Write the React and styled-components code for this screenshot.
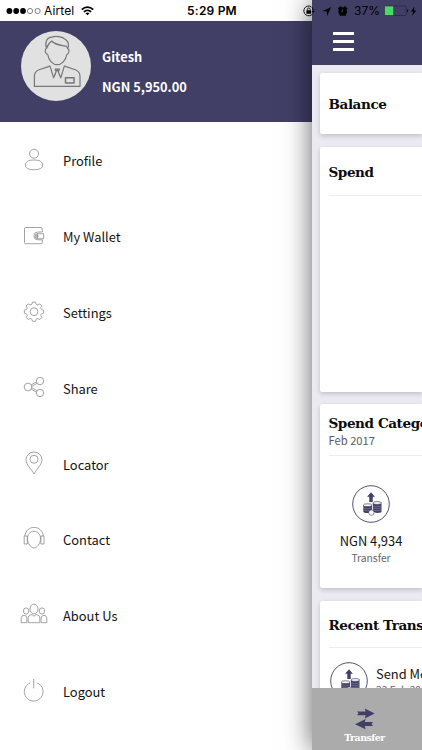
import styled, { createGlobalStyle } from "styled-components";

const NAVY = "#413f66";
const SANS = `"Noto Sans CJK SC", "Noto Sans", sans-serif`;
const SLAB = `"DejaVu Serif", serif`;

const menu = [
    { label: "Profile", Icon: ProfileIcon },
    { label: "My Wallet", Icon: WalletIcon },
    { label: "Settings", Icon: SettingsIcon },
    { label: "Share", Icon: ShareIcon },
    { label: "Locator", Icon: LocatorIcon },
    { label: "Contact", Icon: ContactIcon },
    { label: "About Us", Icon: AboutIcon },
    { label: "Logout", Icon: LogoutIcon },
];

export default function App() {
    return (
        <Screen>
            <GlobalStyle />
            <Drawer>
                <StatusSpace />
                <UserHeader>
                    <Avatar><PersonIcon /></Avatar>
                    <UserInfo>
                        <UserText>Gitesh</UserText>
                        <UserText>NGN 5,950.00</UserText>
                    </UserInfo>
                </UserHeader>
                <Menu>
                    {menu.map(({ label, Icon }) => (
                        <MenuItem key={label}>
                            <Icon />
                            <span>{label}</span>
                        </MenuItem>
                    ))}
                </Menu>
            </Drawer>
            <Home>
                <TopBar>
                    <Burger><i /><i /><i /></Burger>
                </TopBar>
                <Cards>
                    <Card $height={61}>
                        <CardHead $height={61}><CardTitle>Balance</CardTitle></CardHead>
                    </Card>
                    <Card $height={245}>
                        <CardHead $height={49} $line><CardTitle>Spend</CardTitle></CardHead>
                    </Card>
                    <Card $height={184}>
                        <CardHead $height={52} $line>
                            <CardTitle>Spend Categories</CardTitle>
                            <CardDate>Feb 2017</CardDate>
                        </CardHead>
                        <Category>
                            <CoinsIcon />
                            <Amount>NGN 4,934</Amount>
                            <Kind>Transfer</Kind>
                        </Category>
                    </Card>
                    <Card $height={184}>
                        <CardHead $height={47} $line><CardTitle>Recent Transactions</CardTitle></CardHead>
                        <Transaction>
                            <CoinsIcon />
                            <div>
                                <TransactionName>Send Money</TransactionName>
                                <TransactionDate>22 Feb 2017</TransactionDate>
                            </div>
                        </Transaction>
                    </Card>
                </Cards>
                <TabBar>
                    <Tab>
                        <TransferIcon />
                        <span>Transfer</span>
                    </Tab>
                </TabBar>
            </Home>
            <StatusBar>
                <StatusLeft>
                    <SignalIcon />
                    <span>Airtel</span>
                    <WifiIcon />
                </StatusLeft>
                <Clock>5:29 PM</Clock>
                <StatusRight>
                    <StatusIcons />
                    <span>37%</span>
                    <BatteryIcon />
                </StatusRight>
            </StatusBar>
        </Screen>
    );
}

/* ---------- status bar icons ---------- */

function SignalIcon() {
    return (
        <svg width="35" height="8" viewBox="0 0 35 8">
            {[3.4, 10.2, 17].map((x) => <circle key={x} cx={x} cy="4" r="2.9" />)}
            {[24, 31.6].map((x) => (
                <circle key={x} cx={x} cy="4" r="2.6" fill="none" stroke="#333" strokeWidth="0.6" />
            ))}
        </svg>
    );
}

function WifiIcon() {
    return (
        <svg width="13" height="10" viewBox="0 0 13 10" fill="none" stroke="#000" strokeWidth="1.7">
            <path d="M0.8 3.6C4 .3 9 .3 12.2 3.6M2.9 5.9c2-2 5.2-2 7.2 0" />
            <path d="M6.5 9.3L4.5 7.3c1.1-1 2.9-1 4 0z" fill="#000" stroke="none" />
        </svg>
    );
}

/* rotation lock, location arrow and alarm */
function StatusIcons() {
    return (
        <svg width="46" height="14" viewBox="0 0 46 14">
            <path d="M9.3 2.7A4.900 4.900 0 1 0 10.500 10M9.900 3.200a4.900 4.900 0 0 1 1.300 4.400" fill="none" stroke="#000" strokeWidth="0.9" />
            <path d="M9.5 7h3.4L11.2 9z" />
            <rect x="4.4" y="6.2" width="4.8" height="3.6" rx="0.4" />
            <path d="M5.4 6.4V5.3a1.4 1.4 0 0 1 2.8 0v1.1" fill="none" stroke="#000" strokeWidth="0.8" />
            <path d="M29.3 2.9L20.5 7.100l4.300.5.4 4.200z" />
            <circle cx="40.7" cy="7.5" r="4.3" />
            <path d="M36.4 5.2l2.7-2.6M45 5.200l-2.700-2.600M37.900 11.700l1-1M43.500 11.700l-1-1" stroke="#000" strokeWidth="1.6" />
            <path d="M40.7 5v2.8l-2-.9" fill="none" stroke={NAVY} strokeWidth="0.8" />
        </svg>
    );
}

function BatteryIcon() {
    return (
        <svg width="34" height="12" viewBox="0 0 34 12">
            <rect x="0.5" y="1" width="21.6" height="9.5" rx="1" fill="none" stroke="#25243b" strokeWidth="0.7" />
            <rect x="0.8" y="1.3" width="8.4" height="8.9" fill="#4cd964" />
            <path d="M23.2 4.3v3c1.4-.4 1.4-2.6 0-3z" />
            <path d="M30.6 1.4l-3.7 5h2.2l-.9 4.4 4.1-5.4h-2.4z" />
        </svg>
    );
}

/* ---------- drawer icons ---------- */

function PersonIcon() {
    return (
        <svg width="70" height="70" viewBox="0 0 70 70" fill="none" stroke="#777" strokeWidth="1.2" strokeLinejoin="round">
            <path d="M25.6 17.3C23.4 11 26 6.4 30.8 6.2c3-1.500 10.800-.9 13.500 2.100C47.800 11 48 14.500 46.800 17.600" />
            <path d="M25.6 17.3c1-3.500 1.700-5 5.200-7.300 3.500 4.200 9 4.300 14.600 5.200l1.400 2.400c1.900.7 1.500 5-1 5.900-.9 5.900-5.400 10.200-9.600 10.200s-8.600-4.300-9.500-10.200c-2.800-1-3.300-5.300-1.100-6.200z" />
            <path d="M29 34.8l-1.500.8-9.500 3.200c-3.200 1.200-4.600 3-4.600 6.700v9.800H59v-9.800c0-3.700-1.400-5.500-4.600-6.700l-9.500-3.200-1.500-.8" />
            <path d="M29 34.8l3.600 12 3.500-8.700 3.700 8.700 3.600-12M34 38h4.600l-1.200 2.600 1.200 4M34 38l1.100 2.600-1.300 4" />
            <rect x="44.5" y="46.7" width="8.5" height="5.3" strokeWidth="1.5" />
        </svg>
    );
}

function ProfileIcon() {
    return (
        <LineIcon>
            <circle cx="14" cy="7.7" r="4.5" />
            <path d="M14 14c5.6 0 8.6 1.7 8.6 5s-3 4.700-8.600 4.700S5.400 22.300 5.400 19s3-5 8.600-5z" />
        </LineIcon>
    );
}

function WalletIcon() {
    return (
        <LineIcon>
            <path d="M22.3 10V7q0-1.500-1.500-1.500H5.700q-1.200 0-1.200 1.200v13.800q0 1.200 1.200 1.200h15.100q1.500 0 1.500-1.500v-2.500" />
            <path d="M23.6 11.7v5h-6.200v-5zM22.300 10h-4.500a3.900 3.900 0 0 0 0 7.800h4.500M17.700 11.700a2.400 2.400 0 0 0 0 5" />
            <circle cx="17.2" cy="14.1" r="1" />
        </LineIcon>
    );
}

function SettingsIcon() {
    return (
        <LineIcon>
            <circle cx="14" cy="13.7" r="3.9" />
            {/* one tooth outline repeated around the hub */}
            {[0, 45, 90, 135, 180, 225, 270, 315].map((a) => (
                <path
                    key={a}
                    transform={`rotate(${a} 14 13.7)`}
                    d="M11.1 6.7Q12.2 6.3 12.2 5.1L12.5 4.1h3L15.8 5.1Q15.8 6.3 16.9 6.7"
                />
            ))}
        </LineIcon>
    );
}

function ShareIcon() {
    return (
        <LineIcon>
            <circle cx="8" cy="13" r="3.8" />
            <circle cx="20" cy="7" r="3.7" />
            <circle cx="20" cy="19" r="3.7" />
            <path d="M11.2 10.8l5.4-3M11.8 12.3l5.4-3M11.2 15.2l5.4 3M11.8 13.7l5.4 3" />
        </LineIcon>
    );
}

function LocatorIcon() {
    return (
        <LineIcon>
            <path d="M14 24C12 20 6 14.5 6 9.8a8 7.8 0 0 1 16 0C22 14.5 16 20 14 24z" />
            <circle cx="14" cy="9.3" r="4" />
        </LineIcon>
    );
}

function ContactIcon() {
    return (
        <LineIcon>
            <path d="M14 6.3c4 0 6.5 3 6.5 7.5 0 4.700-3.500 9.200-6.500 9.200s-6.500-4.500-6.500-9.200c0-4.500 2.500-7.500 6.500-7.500z" />
            <path d="M4.8 11C5.6 5.6 9.3 2.4 14 2.4s8.600 3.200 9.400 8.600" />
            <path d="M7.3 11H4.2v8h3.1zM20.9 11H24v8h-3.100z" />
        </LineIcon>
    );
}

function AboutIcon() {
    return (
        <LineIcon>
            <ellipse cx="14" cy="8" rx="4" ry="4.9" />
            <ellipse cx="6.1" cy="10" rx="2.7" ry="3.1" />
            <ellipse cx="21.9" cy="10" rx="2.7" ry="3.1" />
            <path d="M8.2 21.7v-5q0-2.200 2.300-2.700l1.500-.5 2 1.800 2-1.800 1.500.5q2.300.5 2.300 2.700v5z" />
            <path d="M6.9 21.7H1.2v-4.500c0-1.700 1.200-2.800 2.900-2.800q2.800 0 2.800 2.800zM21.100 21.700h5.700v-4.500c0-1.700-1.200-2.800-2.900-2.800q-2.800 0-2.800 2.800z" />
        </LineIcon>
    );
}

function LogoutIcon() {
    return (
        <LineIcon>
            <path d="M10.3 5.9a9.4 9.4 0 1 0 6.8 0M13.7 2v9.3" />
        </LineIcon>
    );
}

/* ---------- home icons ---------- */

function CoinsIcon() {
    return (
        <svg width="38" height="38" viewBox="0 0 38 38" fill={NAVY}>
            <circle cx="19" cy="19" r="18.3" fill="#fff" stroke={NAVY} strokeWidth="0.9" />
            <path d="M19 7.3l3.9 4.5h-2.2V17h-3.400v-5.200h-2.200z" />
            <path d="M11.3 20.2v6.6c0 1.6 8.700 1.600 8.700 0v-6.600zM20.800 18v8.800c0 1.600 8.700 1.600 8.700 0V18z" />
            <g fill="#fff" stroke={NAVY} strokeWidth="0.7">
                <ellipse cx="15.65" cy="20.2" rx="4.3" ry="1.4" />
                <ellipse cx="25.15" cy="18" rx="4.3" ry="1.4" />
            </g>
            <path d="M11.6 23q4 1.5 8 0M11.6 25q4 1.5 8 0M21 21q4 1.5 8.2 0M21 23q4 1.5 8.2 0M21 25q4 1.5 8.2 0" fill="none" stroke="#a9a8c0" strokeWidth="0.4" />
            <circle cx="19.4" cy="27.6" r="2.7" fill="#fff" stroke={NAVY} strokeWidth="0.6" />
        </svg>
    );
}

function TransferIcon() {
    return (
        <svg width="22" height="22" viewBox="0 0 22 22" fill={NAVY}>
            <path d="M3 3.4h8.6L10.8.4l9.9 5-9.900 5 .8-3.200H3l1.500-1.900z" />
            <path d="M19 14h-8.200l.8-2.900L1 16.200l10.600 5-.8-3.200H19L17.500 16z" />
        </svg>
    );
}

const GlobalStyle = createGlobalStyle`
    * {
        box-sizing: border-box;
    }
    body {
        margin: 0;
        font-family: ${SANS};
    }
`;

const Screen = styled.div`
    position: relative;
    display: flex;
    width: 422px;
    height: 750px;
    overflow: hidden;
    background: #fff;
`;

const Drawer = styled.aside`
    display: flex;
    flex-direction: column;
    width: 312px;
    flex-shrink: 0;
`;

const StatusSpace = styled.div`
    height: 20.5px;
`;

const UserHeader = styled.header`
    display: flex;
    gap: 11.5px;
    height: 101.5px;
    padding: 10.5px 0 0 20.5px;
    background: ${NAVY};
`;

const Avatar = styled.div`
    width: 70px;
    height: 70px;
    border-radius: 50%;
    background: #e1e1e1;
`;

const UserInfo = styled.div`
    display: flex;
    flex-direction: column;
    gap: 10px;
    padding-top: 16px;
`;

const UserText = styled.div`
    color: #fff;
    font-size: 12.8px;
    font-weight: 700;
    line-height: 20px;
`;

const Menu = styled.nav`
    display: flex;
    flex-direction: column;
`;

const MenuItem = styled.a`
    display: flex;
    align-items: center;
    gap: 15px;
    height: 75.9px;
    padding-left: 20px;
    color: #141414;
    font-size: 12.9px;
    line-height: 20px;

    span {
        padding-top: 2px;
    }
`;

const LineIcon = styled.svg.attrs({ viewBox: "0 0 28 28", width: 28, height: 28 })`
    fill: none;
    stroke: #8c8c8c;
    stroke-width: 0.8;
    overflow: visible;
`;

const Home = styled.main`
    position: relative;
    display: flex;
    flex-direction: column;
    width: 110px;
    height: 750px;
    background: #ebeaf2;
    box-shadow: 0 0 26px rgba(0, 0, 0, 0.62);
`;

const TopBar = styled.div`
    height: 65px;
    flex-shrink: 0;
    padding: 32px 0 0 21px;
    background: ${NAVY};
`;

const Burger = styled.div`
    display: flex;
    flex-direction: column;
    gap: 5px;
    width: 21px;

    i {
        height: 3px;
        background: #fff;
    }
`;

const Cards = styled.div`
    display: flex;
    flex-direction: column;
    flex: 1;
    gap: 12.5px;
    min-height: 0;
    padding: 8px 0 0 8px;
    overflow: hidden;
`;

const Card = styled.section`
    flex-shrink: 0;
    height: ${({ $height }) => $height}px;
    padding-left: 8.5px;
    border-radius: 2px 0 0 2px;
    background: #fff;
    box-shadow: 0 2px 5px rgba(0, 0, 0, 0.18);
`;

const CardHead = styled.div`
    display: flex;
    flex-direction: column;
    justify-content: center;
    height: ${({ $height }) => $height}px;
    padding-top: 2px;
    border-bottom: 1px solid ${({ $line }) => ($line ? "#ececec" : "transparent")};
`;

const CardTitle = styled.h2`
    margin: 0;
    color: #0c0c0c;
    font-family: ${SLAB};
    font-size: 13.6px;
    font-weight: 700;
    line-height: 18px;
    letter-spacing: -0.45px;
    white-space: nowrap;
`;

const CardDate = styled.div`
    color: #5c5c5c;
    font-size: 11.2px;
    line-height: 16px;
`;

const Category = styled.div`
    display: flex;
    flex-direction: column;
    align-items: center;
    width: 85px;
    padding-top: 28.5px;
`;

const Amount = styled.div`
    margin-top: 9.5px;
    color: #141414;
    font-size: 12.9px;
    line-height: 18px;
    white-space: nowrap;
`;

const Kind = styled.div`
    color: #666;
    font-size: 10.3px;
    line-height: 16px;
`;

const Transaction = styled.div`
    display: flex;
    gap: 8px;
    padding: 14px 0 0 1.5px;
    white-space: nowrap;

    svg {
        flex-shrink: 0;
    }
`;

const TransactionName = styled.div`
    margin-top: 3px;
    color: #141414;
    font-size: 12.9px;
    line-height: 18px;
`;

const TransactionDate = styled.div`
    color: #666;
    font-size: 10.3px;
    line-height: 14px;
`;

const TabBar = styled.footer`
    flex-shrink: 0;
    height: 62px;
    background: #ababab;
`;

const Tab = styled.div`
    display: flex;
    flex-direction: column;
    align-items: center;
    gap: 1px;
    width: 105px;
    padding-top: 20px;
    color: #fff;
    font-family: ${SLAB};
    font-size: 9.4px;
    font-weight: 700;
    line-height: 14px;
    letter-spacing: -0.5px;
`;

const StatusBar = styled.div`
    position: absolute;
    top: 0;
    left: 0;
    right: 0;
    display: grid;
    grid-template-columns: 1fr auto 1fr;
    align-items: center;
    height: 21px;
    padding: 0 4px 0 6px;
    color: #000;
    font-family: Inter, sans-serif;
    font-size: 12px;
`;

const StatusLeft = styled.div`
    display: flex;
    align-items: center;
    gap: 3px;

    span {
        margin-right: 4px;
        letter-spacing: 0.1px;
    }
`;

const Clock = styled.div`
    font-weight: 600;
    letter-spacing: 0.2px;
`;

const StatusRight = styled.div`
    display: flex;
    align-items: center;
    justify-content: flex-end;
    gap: 4px;

    span {
        margin-left: 2px;
    }
`;
